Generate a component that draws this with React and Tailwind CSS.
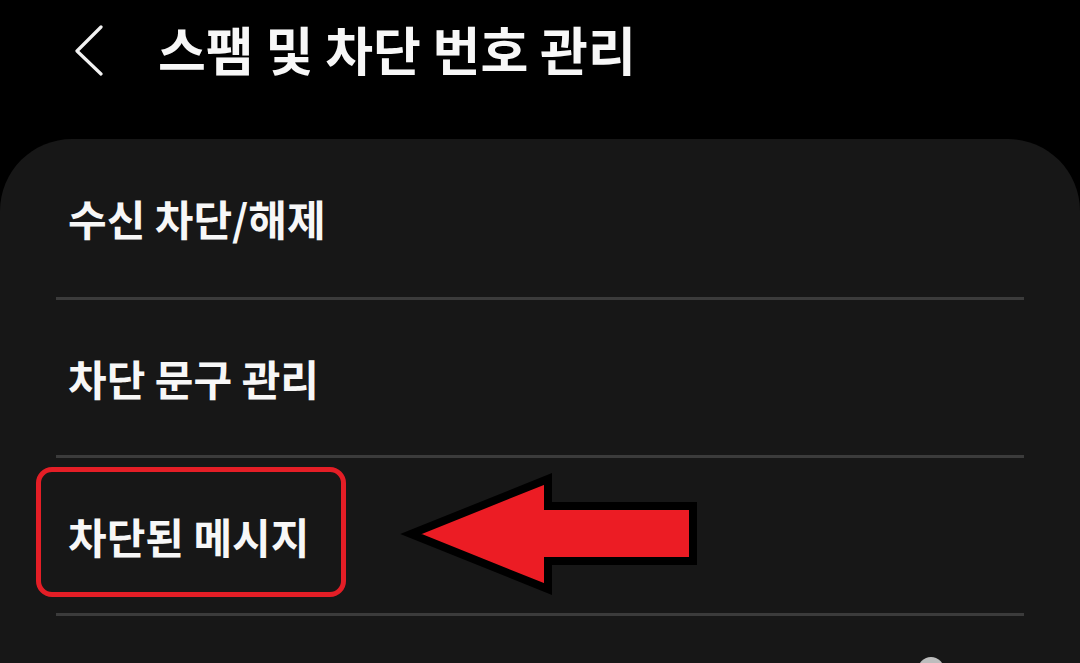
const rows = ["수신 차단/해제", "차단 문구 관리", "차단된 메시지"];

const font = { fontFamily: '"Noto Sans CJK KR", "Noto Sans", sans-serif' };

export default function App() {
  return (
    <div className="relative w-[1080px] h-[663px] overflow-hidden bg-black text-[#f7f7f7]" style={font}>
      {/* header */}
      <div className="h-[139px] flex items-start pt-[17px]">
        <div className="w-[158px] flex pl-[72px] pt-[7px]">
          <svg width="34" height="52" viewBox="0 0 34 52" fill="none">
            <path d="M29 3 L5 27 L29 50" stroke="#f2f2f2" strokeWidth="3.2" strokeLinecap="round" strokeLinejoin="round" />
          </svg>
        </div>
        <h1 className="text-[52px] font-bold leading-[64px]">스팸 및 차단 번호 관리</h1>
      </div>

      {/* card */}
      <div className="bg-[#171717] rounded-t-[72px] h-[524px] px-[56px]">
        {rows.map((label, i) => (
          <div key={label}>
            <div className={`flex items-center pl-[12px] ${i === 0 ? "h-[158px]" : "h-[155px]"}`}>
              <span className="text-[42px] font-bold leading-none">{label}</span>
            </div>
            <div className="h-[3px] bg-[#3b3b3b]" />
          </div>
        ))}
      </div>

      {/* annotation: red box */}
      <div className="absolute left-[36px] top-[467px] w-[310px] h-[130px] rounded-[16px] border-[5px] border-[#e41e26]" />

      {/* annotation: arrow */}
      <svg className="absolute left-0 top-0 pointer-events-none" width="1080" height="663">
        <polygon
          points="411,534 548,479 548,506 693,506 693,561 548,561 548,589"
          fill="#ec1c24"
          stroke="#000"
          strokeWidth="8"
          strokeLinejoin="miter"
        />
      </svg>

      {/* partial knob at bottom */}
      <div className="absolute left-[918px] top-[657px] w-[26px] h-[26px] rounded-full bg-[#bdbdbd]" />
    </div>
  );
}
